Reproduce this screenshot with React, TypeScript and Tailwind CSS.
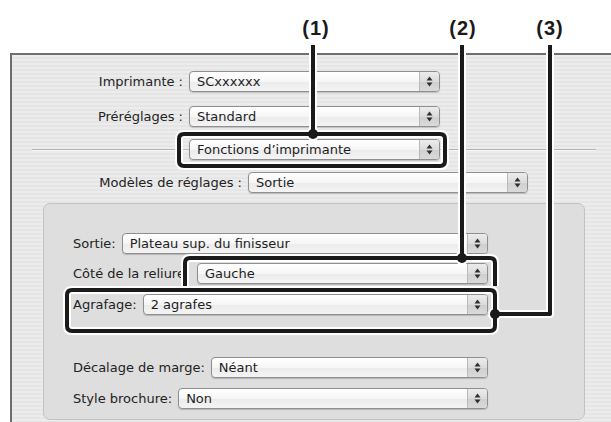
import React from 'react';

function Arrows() {
  return (
    <svg width="7" height="11" viewBox="0 0 7 11">
      <path d="M3.5 0.5 L6.5 4.5 H0.5 Z" fill="#2e2e2e" />
      <path d="M3.5 10.5 L6.5 6.5 H0.5 Z" fill="#2e2e2e" />
    </svg>
  );
}

function Select({ value, className = '' }: { value: string; className?: string }) {
  return (
    <div
      className={`flex h-[21px] shrink-0 rounded-[4px] border border-[#8f8f8f] bg-[linear-gradient(#ffffff,#f6f6f6_50%,#ebebeb_51%,#f4f4f4)] shadow-[0_1px_1px_rgba(0,0,0,0.18)] ${className}`}
    >
      <div className="flex-1 truncate pl-[7px] text-[13px] leading-[19px] text-[#1e1e1e]">{value}</div>
      <div className="flex w-[20px] items-center justify-center rounded-r-[3px] border-l border-[#b9b9b9] bg-[linear-gradient(#ececec,#dcdcdc_50%,#cfcfcf_51%,#dadada)]">
        <Arrows />
      </div>
    </div>
  );
}

function Overlay() {
  const halo = { stroke: '#ffffff', strokeWidth: 8, fill: 'none', strokeLinejoin: 'round' as const };
  const ink = { stroke: '#1a1a1a', strokeWidth: 4, fill: 'none', strokeLinejoin: 'round' as const };
  const shapes = [
    'M313 45 V134',
    'M462 45 V258',
    'M550 45 V314 H495',
    'M184 134 H440 Q445 134 445 139 V161 Q445 166 440 166 H184 Q179 166 179 161 V139 Q179 134 184 134 Z',
    'M185 286 V263 Q185 258 190 258 H490 Q495 258 495 263 V286',
    'M72 290 H490 Q495 290 495 295 V326 Q495 331 490 331 H72 Q67 331 67 326 V295 Q67 290 72 290 Z',
  ];
  const dots = [
    [313, 134],
    [462, 258],
    [495, 314],
  ];
  return (
    <svg className="pointer-events-none absolute left-0 top-0" width="611" height="422" viewBox="0 0 611 422">
      {shapes.map((d, i) => (
        <path key={`h${i}`} d={d} {...halo} />
      ))}
      {dots.map(([x, y], i) => (
        <circle key={`hd${i}`} cx={x} cy={y} r="7" fill="#ffffff" />
      ))}
      {shapes.map((d, i) => (
        <path key={`k${i}`} d={d} {...ink} />
      ))}
      {dots.map(([x, y], i) => (
        <circle key={`kd${i}`} cx={x} cy={y} r="5" fill="#1a1a1a" />
      ))}
    </svg>
  );
}

function Callout({ n, left }: { n: number; left: string }) {
  return (
    <div
      className={`absolute top-[18px] ${left} w-[40px] text-center font-['Liberation_Sans',Arial,sans-serif] text-[20px] font-bold leading-none tracking-[1px] text-[#1a1a1a]`}
    >
      ({n})
    </div>
  );
}

export default function App() {
  return (
    <div className="relative h-[422px] w-[611px] overflow-hidden bg-white font-['DejaVu_Sans',sans-serif] text-[13px] text-[#222]">
      <div className="ml-[10px] mt-[53px] h-[400px] border-l-2 border-t-2 border-[#6e6e6e] bg-[repeating-linear-gradient(0deg,#ececec_0px,#ececec_2px,#e5e5e5_2px,#e5e5e5_4px)]">
        <div className="mt-[16px] flex items-center gap-[6px]">
          <div className="w-[171px] text-right">Imprimante :</div>
          <Select value="SCxxxxxx" className="w-[251px]" />
        </div>
        <div className="mt-[14px] flex items-center gap-[6px]">
          <div className="w-[171px] text-right">Préréglages :</div>
          <Select value="Standard" className="w-[251px]" />
        </div>
        <div className="mt-[12px] flex items-center">
          <div className="ml-[20px] h-[2px] w-[157px] border-t border-b border-t-[#b3b3b3] border-b-[#f7f7f7]" />
          <Select value="Fonctions d’imprimante" className="w-[251px]" />
          <div className="h-[2px] w-[156px] border-t border-b border-t-[#b3b3b3] border-b-[#f7f7f7]" />
        </div>
        <div className="mt-[12px] flex items-center gap-[6px]">
          <div className="w-[230px] text-right">Modèles de réglages :</div>
          <Select value="Sortie" className="w-[280px]" />
        </div>
        <div className="ml-[31px] mt-[10px] h-[217px] w-[542px] rounded-[7px] border border-[#c2c2c2] bg-[#dedede] pl-[29px] pr-[96px] pt-[29px]">
          <div className="flex items-center gap-[6px]">
            <div className="whitespace-nowrap">Sortie:</div>
            <Select value="Plateau sup. du finisseur" className="flex-1" />
          </div>
          <div className="mt-[9px] flex items-center gap-[6px]">
            <div className="w-[118px] overflow-hidden whitespace-nowrap">Côté de la reliure:</div>
            <Select value="Gauche" className="flex-1" />
          </div>
          <div className="mt-[10px] flex items-center gap-[6px]">
            <div className="whitespace-nowrap">Agrafage:</div>
            <Select value="2 agrafes" className="flex-1" />
          </div>
          <div className="mt-[42px] flex items-center gap-[6px]">
            <div className="whitespace-nowrap">Décalage de marge:</div>
            <Select value="Néant" className="flex-1" />
          </div>
          <div className="mt-[10px] flex items-center gap-[6px]">
            <div className="whitespace-nowrap">Style brochure:</div>
            <Select value="Non" className="flex-1" />
          </div>
        </div>
      </div>
      <Callout n={1} left="left-[296px]" />
      <Callout n={2} left="left-[443px]" />
      <Callout n={3} left="left-[530px]" />
      <Overlay />
    </div>
  );
}
